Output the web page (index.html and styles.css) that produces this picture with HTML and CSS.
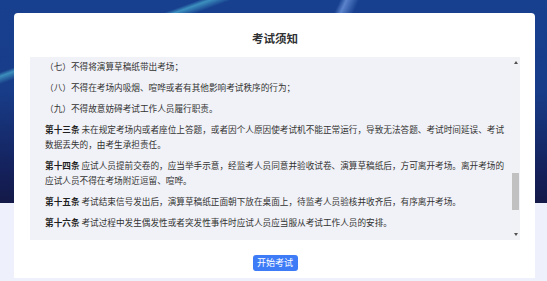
FILE: index.html
```html
<!DOCTYPE html>
<html lang="zh-CN">
<head>
  <meta charset="UTF-8" />
  <meta name="viewport" content="width=device-width, initial-scale=1.0" />
  <title>考试须知</title>
  <link rel="stylesheet" href="styles.css">
</head>
<body>
  <div class="modal">
    <h2 class="modal-title">考试须知</h2>
    <div class="notice-wrap">
      <div class="notice" id="notice">
        <p><b>第一条</b> 应试人员应当在考试开始前30分钟到达考场，凭准考证和有效身份证件进入考场，并接受考试工作人员的身份核验。</p>
        <p><b>第二条</b> 应试人员除携带必要的文具外，不得携带书籍、资料、笔记、通讯工具、电子设备等物品进入考场。</p>
        <p><b>第三条</b> 应试人员应当按照准考证上的座位号入座，并将准考证和有效身份证件放在桌面左上角。</p>
        <p><b>第四条</b> 考试开始前，应试人员应当认真阅读考试须知，核对屏幕上显示的个人信息，如有疑问应当及时举手示意。</p>
        <p><b>第五条</b> 考试开始指令发出后，应试人员方可开始答题。考试开始30分钟后，迟到的应试人员不得进入考场。</p>
        <p><b>第六条</b> 应试人员在考试过程中应当独立完成答题，不得以任何方式作弊或者协助他人作弊。</p>
        <p><b>第七条</b> 应试人员遇到试题字迹不清、计算机故障等问题时，可以举手询问，但不得要求监考人员解释试题。</p>
        <p><b>第八条</b> 应试人员应当保持考场安静，服从考试工作人员的管理，接受监考人员的监督和检查。</p>
        <p><b>第九条</b> 考试开始后30分钟内，应试人员不得交卷离开考场。</p>
        <p><b>第十条</b> 演算草稿纸由考场统一发放，应试人员应当在草稿纸上填写姓名和准考证号。</p>
        <p><b>第十一条</b> 应试人员应当爱护考试设备，不得擅自关闭、重启计算机或者更改计算机设置。</p>
        <p><b>第十二条</b> 应试人员在考场内应当遵守以下规定：</p>
        <p>（一）不得旁窥、交头接耳、互打暗号或者手势；</p>
        <p>（二）不得携带规定以外的物品进入考场或者未放在指定位置；</p>
        <p>（三）不得传、接物品或者交换演算草稿纸；</p>
        <p>（四）不得擅自离开座位或者考场；</p>
        <p>（五）不得使用计算机进行与考试无关的操作；</p>
        <p>（六）不得故意损坏考试设备；</p>
        <p id="anchor">（七）不得将演算草稿纸带出考场；</p>
        <p>（八）不得在考场内吸烟、喧哗或者有其他影响考试秩序的行为；</p>
        <p>（九）不得故意妨碍考试工作人员履行职责。</p>
        <p><b>第十三条</b> 未在规定考场内或者座位上答题，或者因个人原因使考试机不能正常运行，导致无法答题、考试时间延误、考试数据丢失的，由考生承担责任。</p>
        <p><b>第十四条</b> 应试人员提前交卷的，应当举手示意，经监考人员同意并验收试卷、演算草稿纸后，方可离开考场。离开考场的应试人员不得在考场附近逗留、喧哗。</p>
        <p><b>第十五条</b> 考试结束信号发出后，演算草稿纸正面朝下放在桌面上，待监考人员验核并收齐后，有序离开考场。</p>
        <p class="last-seen"><b>第十六条</b> 考试过程中发生偶发性或者突发性事件时应试人员应当服从考试工作人员的安排。</p>
        <p><b>第十七条</b> 应试人员违反本须知的，按照有关规定进行处理。</p>
        <p><b>第十八条</b> 本须知由考试组织机构负责解释。</p>
        <p><b>第十九条</b> 本须知自发布之日起施行。</p>
        <p>请认真阅读以上内容，点击“开始考试”进入答题。</p>
      </div>
      <div class="scrollbar">
        <span class="arrow arrow-up"></span>
        <span class="thumb"></span>
        <span class="arrow arrow-down"></span>
      </div>
    </div>
    <div class="footer">
      <button class="btn-start">开始考试</button>
    </div>
  </div>
  <script>
    // 滚动到第十二条（七）
    const box = document.getElementById("notice");
    const anchor = document.getElementById("anchor");
    box.scrollTop = anchor.offsetTop - 2;
  </script>
</body>
</html>
```

FILE: styles.css
```css
html, body {
  height: 100%;
}
body {
  margin: 0;
  overflow: hidden;
  font-family: "Noto Sans CJK SC", "Microsoft YaHei", sans-serif;
  background-color: #eef1fb;
  background-image:
    linear-gradient(160deg, transparent 0 18%, rgba(90, 210, 230, 0.55) 19%, transparent 21% 100%),
    linear-gradient(115deg, transparent 0 53%, rgba(120, 160, 230, 0.7) 54%, transparent 56% 100%),
    linear-gradient(to bottom, #17408f 0%, #183c88 45%, #14205a 85%, #141a48 100%);
  background-size: 100% 203px;
  background-repeat: no-repeat;
}
.modal {
  margin: 13px 12px 0 14px;
  height: 265px;
  box-sizing: border-box;
  padding: 15px 15px 0 16px;
  background: #fff;
  border-radius: 4px 4px 0 0;
  display: flex;
  flex-direction: column;
}
.modal-title {
  margin: 0 0 9px;
  font-size: 11.5px;
  line-height: 20px;
  font-weight: bold;
  text-align: center;
  color: #303133;
}
.notice-wrap {
  position: relative;
  flex: none;
  height: 183px;
  background: #f1f2f7;
}
.notice {
  position: relative;
  height: 100%;
  box-sizing: border-box;
  overflow-y: scroll;
  scrollbar-width: none;
  padding: 0 12px 0 15px;
  font-size: 8.65px;
  line-height: 15px;
  color: #333;
}
.notice::-webkit-scrollbar {
  display: none;
}
.notice p {
  margin: 0 0 6px;
}
.notice p:first-child {
  margin-top: 6px;
}
.notice p.last-seen {
  margin-bottom: 10px;
}
.notice b {
  color: #1f1f1f;
}
.scrollbar {
  position: absolute;
  top: 0;
  right: 0;
  bottom: 0;
  width: 8px;
  background: #f1f2f5;
}
.thumb {
  position: absolute;
  top: 116px;
  left: 0;
  width: 7px;
  height: 37px;
  background: #c1c1c1;
}
.arrow {
  position: absolute;
  left: 2px;
  width: 0;
  height: 0;
  border-left: 2px solid transparent;
  border-right: 2px solid transparent;
}
.arrow-up {
  top: 4px;
  border-bottom: 3px solid #505050;
}
.arrow-down {
  bottom: 4px;
  border-top: 3px solid #505050;
}
.footer {
  display: flex;
  justify-content: center;
  padding-top: 15px;
}
.btn-start {
  width: 45px;
  height: 16px;
  padding: 0;
  border: none;
  border-radius: 3px;
  background: #3e7cf7;
  color: #fff;
  font-family: inherit;
  font-size: 9px;
  line-height: 16px;
  cursor: pointer;
}
```
